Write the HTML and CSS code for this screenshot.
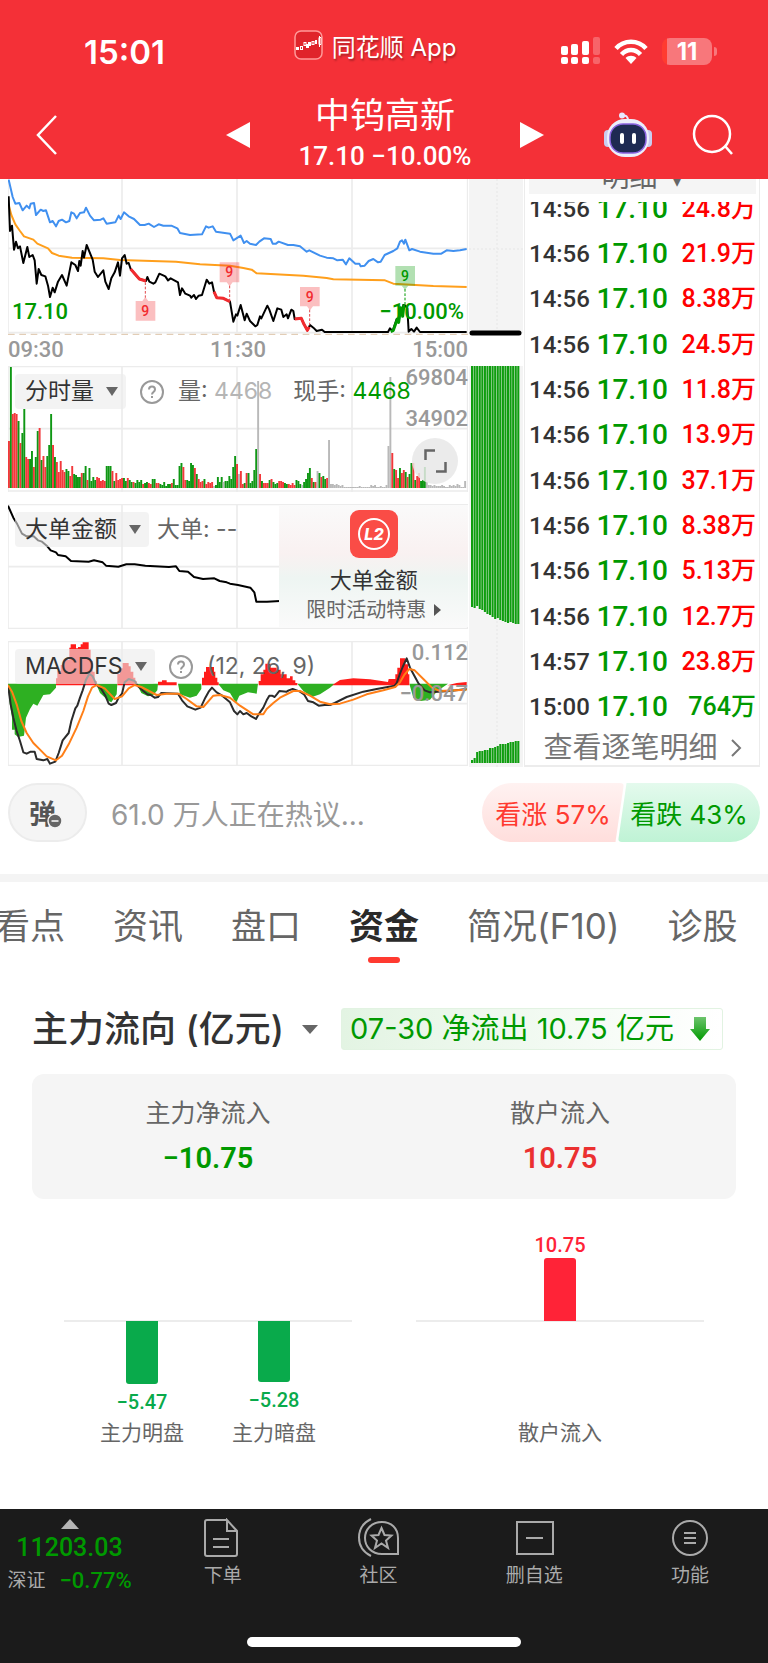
FILE: index.html
```html
<!DOCTYPE html>
<html lang="zh-CN">
  <head>
    <meta charset="UTF-8" />
    <meta name="viewport" content="width=device-width, initial-scale=1.0" />
    <title>中钨高新</title>
    <link rel="stylesheet" href="styles.css">
  </head>
  <body>
    <header class="top">
      <div class="status">
        <span class="clock">15:01</span>
        <span class="app">
          <svg width="29" height="30" viewBox="0 0 29 30">
            <rect x="1" y="1" width="27" height="28" rx="6" fill="#e0242b" stroke="#f99" stroke-width="1.500" />
            <g fill="#fff">
              <rect x="2" y="17" width="3" height="3" /><rect x="12" y="14" width="3" height="4" />
              <rect x="14" y="12" width="3" height="4" /><rect x="21" y="10" width="2" height="4" />
            </g>
            <g fill="none" stroke="#fff">
              <rect x="6.500" y="16.500" width="2" height="3" /><rect x="10" y="12.500" width="2" height="3" />
              <rect x="18" y="11.500" width="2" height="3" /><path d="M25.500 6v11M25 7.500h2v7h-2z" />
            </g>
          </svg>
          同花顺 App
        </span>
        <span class="signals">
          <svg width="40" height="28" viewBox="0 0 40 28" fill="#fff">
            <rect x="1" y="9" width="7" height="9" rx="2" /><rect x="11" y="7" width="7" height="11" rx="2" />
            <rect x="22" y="4" width="7" height="14" rx="2" /><rect x="33" y="0" width="7" height="18" rx="2" opacity=".25" />
            <rect x="1" y="20" width="7" height="7" rx="2" /><rect x="11" y="20" width="7" height="7" rx="2" />
            <rect x="22" y="20" width="7" height="7" rx="2" /><rect x="33" y="20" width="7" height="7" rx="2" opacity=".25" />
          </svg>
          <svg width="34" height="25" viewBox="0 0 34 25">
            <g fill="none" stroke="#fff" stroke-width="4.500">
              <path d="M2 9.500C10 .500 24 .500 32 9.500" /><path d="M7.500 15.500C13 9.500 21 9.500 26.500 15.500" />
            </g>
            <path d="M17 25l-5.500-6c3-3 8-3 11 0z" fill="#fff" />
          </svg>
          <span class="battery">11</span>
        </span>
      </div>
      <div class="titlebar">
        <button class="icon-btn back" aria-label="返回">
          <svg width="24" height="42" viewBox="0 0 24 42"><path d="M21 2L3 21l18 19" fill="none" stroke="#fff" stroke-width="2.500" /></svg>
        </button>
        <div class="stock">
          <button class="icon-btn" aria-label="上一只"><svg width="24" height="26" viewBox="0 0 24 26"><path d="M24 0v26L0 13z" fill="#fff" /></svg></button>
          <div class="stock-name">
            <h1>中钨高新</h1>
            <p>17.10 −10.00%</p>
          </div>
          <button class="icon-btn" aria-label="下一只"><svg width="24" height="26" viewBox="0 0 24 26"><path d="M0 0v26l24-13z" fill="#fff" /></svg></button>
        </div>
        <div class="tools">
          <button class="icon-btn" aria-label="助手">
            <svg width="48" height="46" viewBox="0 0 48 46">
              <path d="M24 9c0-5-2-6-6-5.500" fill="none" stroke="#e8e8ff" stroke-width="2" />
              <circle cx="18" cy="3.500" r="3" fill="#e8e8ff" />
              <rect x="0" y="18" width="8" height="17" rx="4" fill="#c9cdf0" /><rect x="40" y="18" width="8" height="17" rx="4" fill="#c9cdf0" />
              <rect x="3" y="7" width="42" height="38" rx="18" fill="#eceefb" />
              <rect x="6" y="12" width="36" height="29" rx="13" fill="#1e2a52" stroke="#8a63e0" stroke-width="1.500" />
              <rect x="16" y="21" width="4" height="11" rx="2" fill="#fff" /><rect x="28" y="21" width="4" height="11" rx="2" fill="#fff" />
            </svg>
          </button>
          <button class="icon-btn" aria-label="搜索">
            <svg width="42" height="42" viewBox="0 0 42 42" fill="none" stroke="#fff" stroke-width="2.500"><circle cx="20" cy="20" r="18" /><path d="M33 32l7 8" /></svg>
          </button>
        </div>
      </div>
    </header>

    <main>
      <section class="quote">
        <div class="charts">
          <div class="chart">
            <svg viewBox="24 12 1380 468">
              <path class="grid" d="M24 12V474M366 12V474M711 12V474M1056 12V474M1403 12V474M24 220H1404M24 473H1404" />
              <path d="M24 478H1404" stroke="#dcc3a8" stroke-width="3" stroke-dasharray="20 14" />
              <polyline class="line blue" points="26,14 38,66 46,86 58,84 68,106 80,92 88,100 92,86 102,84 108,120 122,104 130,108 138,106 150,142 158,138 168,154 176,138 186,134 198,142 208,138 214,112 222,116 230,130 240,114 252,112 258,98 270,122 282,136 302,134 310,130 320,146 346,142 356,122 362,132 372,112 386,124 402,132 420,150 434,150 446,146 462,156 476,148 490,152 514,152 532,160 540,174 570,180 606,178 618,154 626,158 638,154 648,170 690,176 700,196 722,182 732,204 740,198 750,206 768,210 778,200 792,190 812,192 818,206 828,206 836,200 864,210 880,210 900,214 920,230 928,226 960,242 980,248 1000,250 1012,256 1028,254 1038,268 1048,250 1066,266 1078,266 1082,274 1094,272 1106,258 1120,252 1134,262 1142,260 1154,240 1180,228 1192,220 1200,200 1206,196 1212,206 1216,194 1228,226 1236,222 1260,230 1300,236 1324,236 1340,226 1360,228 1380,226 1400,222" />
              <polyline class="line orange" points="26,90 34,120 46,148 60,168 72,184 100,194 112,206 144,220 156,234 176,242 216,248 310,250 360,255 528,260 600,268 690,272 730,279 755,284 770,295 910,302 980,309 1000,313 1155,316 1180,326 1300,333 1400,336" />
              <polyline class="line" points="26,64 30,168 36,152 42,224 48,200 54,220 60,214 70,264 82,216 88,246 98,240 104,256 110,326 116,282 124,300 136,304 144,332 150,366 158,338 164,352 174,320 186,300 200,332 214,262 226,270 234,288 238,258 242,272 248,228 252,248 260,210 278,254 284,290 294,306 310,286 316,320 326,342 334,310 344,292 354,262 360,302 366,250 374,240 380,266 386,264 392,282 418,312 438,318 442,306 448,320 460,326 466,322 478,296 496,304 504,316 512,310 534,322 540,360 546,340 556,356 570,362 574,368 582,360 588,372 596,362 606,360 620,314 628,326 636,322 642,350 650,368 670,370 690,380 700,440 708,418 712,422 722,390 734,436 740,416 750,438 766,454 772,450 780,424 784,430 802,392 808,404 820,438 832,400 844,404 850,426 860,418 864,430 874,404 880,408 884,432 904,430 912,448 922,466 930,450 940,458 950,468 966,464 974,471 1164,471 1170,460 1178,468 1190,432 1194,440 1200,400 1206,420 1210,390 1216,392 1222,400 1226,470 1234,462 1242,470 1250,458 1260,471 1400,471" />
              <g class="nine">
                <path class="line" d="M392 282L418 312 438 318M642 350l8 18 20 2 20 10M884 432l20-2 8 18 10 18 6-10" />
                <path class="drop" d="M436 322V368M689 332V380M929 404V452" />
                <path class="flag" d="M407 378h20l9-12 9 12h21v59h-59zM659 262h59v60h-20l-9 12-9-12h-21zM900 336h59v58h-20l-9 12-9-12h-21z" />
                <text x="436" y="422">9</text><text x="688" y="307">9</text><text x="929" y="380">9</text>
              </g>
              <g class="nine down">
                <path class="line" d="M1172 470l8-4 12-34 4 10 6-44 6 26 4-36" />
                <path class="drop" d="M1215 342V395" />
                <path class="flag" d="M1186 273h59v59h-20l-10 12-10-12h-19z" />
                <text x="1215" y="317">9</text>
              </g>
            </svg>
            <span class="axis green price">17.10</span>
            <span class="axis green rate">−10.00%</span>
          </div>
          <div class="times"><span>09:30</span><span>11:30</span><span>15:00</span></div>

          <div class="chart">
            <svg viewBox="24 18 1380 378">
              <path class="grid" d="M24 19H1404M24 206H1404M24 393H1404M24 18V396M366 18V396M711 18V396M1056 18V396M1403 18V396" />
              <g id="volume"></g>
            </svg>
            <div class="legend">
              <span class="pick"><select aria-label="副图一"><option>分时量</option></select></span>
              <svg class="help" width="24" height="24" viewBox="0 0 24 24"><circle cx="12" cy="12" r="11" /><path d="M9 9.500C9 5.500 15 5.500 15 9.500 15 12 12 12 12 14.500M12 16v2" /></svg>
              <span>量: <i>4468</i></span>
              <span class="now">现手: <b>4468</b></span>
            </div>
            <span class="axis top-num">69804</span>
            <span class="axis mid-num">34902</span>
            <button class="expand" aria-label="全屏">
              <svg width="23" height="24" viewBox="0 0 23 24" fill="none" stroke="#666" stroke-width="2.500"><path d="M1.500 11V1.500H11M21.500 13v9.500H12" /></svg>
            </button>
          </div>

          <div class="chart">
            <svg viewBox="24 27 1380 375">
              <path class="grid" d="M24 28H1404M24 215H1404M24 401H1404M24 27V402M366 27V402M711 27V402M1403 27V402" />
              <polyline class="line" points="24,32 40,68 52,88 66,116 80,124 101,124 114,136 126,140 142,154 152,166 168,172 174,180 197,184 213,198 266,200 282,196 308,202 318,212 355,215 379,208 404,208 436,212 507,216 528,214 538,228 564,230 582,246 609,252 643,250 659,258 680,262 690,266 714,270 751,278 763,292 769,320 801,320 840,318" />
            </svg>
            <div class="legend tight">
              <span class="pick"><select aria-label="副图二"><option>大单金额</option></select></span>
              <span>大单: --</span>
            </div>
            <a class="promo" href="#">
              <svg width="48" height="48" viewBox="0 0 48 48">
                <rect width="48" height="48" rx="9" fill="#fa4c46" /><circle cx="24" cy="24" r="15" fill="none" stroke="#fff" stroke-width="2" />
                <text x="24" y="30" fill="#fff" font-size="16" font-weight="800" font-style="italic" text-anchor="middle">L2</text>
              </svg>
              <strong>大单金额</strong>
              <small>限时活动特惠 <svg width="7" height="12" viewBox="0 0 7 12"><path d="M0 0l7 6-7 6z" fill="#555" /></svg></small>
            </a>
          </div>

          <div class="chart">
            <svg viewBox="24 20 1380 375">
              <path class="grid" d="M24 21H1404M24 208H1404M24 394H1404M24 20V395M366 20V395M711 20V395M1056 20V395M1403 20V395" />
              <g fill="#2eb022">
                <path d="M24 148L28 200 36 250 36 286 44 286 44 300 54 308 72 304 78 250 90 224 100 208 112 214 130 182 150 180 168 160V148zM288 148l12 28 26 24 8 4 16-24 2-32zM410 148l14 28 20 10 16-4 12-14 2-20zM534 148l6 32 30 10 20-6 14-20v-16zM654 148l16 20 20 8 18 30 10-22 26-10 26 4 4-30zM892 148l18 22 26 18 24-8 30-20 14-12zM1228 148l12 42 22 10 28-4 22-26 32-22z" />
              </g>
              <path d="M168 153V132H172V110H182V92H190V76H208V40H212V30H228V42H234V38H242V30H248V24H266V46H272V80H278V112H284V140H290V153zM352 153V118H360V102H368V86H386V96H392V112H400V130H406V140H410V153zM474 153V142H486V138H500V144H530V153zM606 153V130H612V112H618V98H642V112H646V130H652V144H656V153zM776 153V140H782V120H790V106H796V88H812V100H830V106H842V120H860V132H870V126H878V138H886V146H892V153zM996 153L1020 137 1060 132 1110 135 1164 143 1166 134H1186V120H1192V100H1200V72H1216V90H1224V120H1228V153zM1342 153L1370 146 1400 143V153z" fill="#ff1c1a" />
              <polyline class="line dark" points="24,152 32,210 40,250 50,290 60,320 70,354 80,358 92,352 104,352 110,374 130,378 142,374 150,388 166,382 176,356 188,318 206,296 214,260 226,222 232,214 240,190 248,168 258,136 268,118 278,126 290,152 304,164 316,184 326,208 334,212 348,206 356,190 366,178 374,144 386,134 404,140 414,156 430,170 442,180 452,182 464,190 474,188 484,176 534,178 546,198 562,216 586,226 602,220 616,190 626,172 636,160 650,174 664,182 690,204 702,230 712,240 720,230 730,240 740,236 754,246 768,254 776,240 790,220 800,198 808,184 816,184 824,188 832,178 838,170 860,172 866,168 878,164 890,168 900,172 912,180 924,200 940,204 956,214 974,212 990,212 1004,206 1040,188 1090,172 1130,164 1184,154 1190,146 1200,118 1208,98 1220,72 1230,100 1256,148 1274,168 1290,174 1350,170 1400,164" />
              <polyline class="line macd" points="24,152 36,172 50,210 64,260 80,296 100,326 120,346 140,366 168,378 186,364 206,330 230,280 250,230 264,186 276,160 290,152 314,162 344,194 366,186 386,162 404,152 424,158 470,182 500,178 536,178 560,194 590,216 610,218 640,184 660,182 690,190 720,214 760,240 790,240 800,224 820,206 840,190 880,170 900,170 930,184 960,202 990,210 1020,208 1060,196 1100,180 1150,168 1186,158 1200,144 1214,120 1228,104 1244,108 1270,134 1296,160 1320,170 1400,166" />
            </svg>
            <div class="legend">
              <span class="pick"><select aria-label="副图三"><option>MACDFS</option></select></span>
              <svg class="help" width="24" height="24" viewBox="0 0 24 24"><circle cx="12" cy="12" r="11" /><path d="M9 9.500C9 5.500 15 5.500 15 9.500 15 12 12 12 12 14.500M12 16v2" /></svg>
              <span>(12, 26, 9)</span>
            </div>
            <span class="axis top-num">0.112</span>
            <span class="axis mid-num">−0.047</span>
          </div>
        </div>

        <svg class="after" viewBox="0 0 56 588">
          <path d="M1 0h54v154H1zM1 187h54v401H1z" fill="#f4f4f4" />
          <path d="M29 0v154M29 430v158M1 70h54" stroke="#e6e6e6" stroke-dasharray="2 2" />
          <path d="M4 154h47" stroke="#000" stroke-width="5" stroke-linecap="round" />
          <g id="afterHours" fill="#0f9d0f"></g>
        </svg>

        <div class="ticks">
          <button class="ticks-head">明细 <span>▾</span></button>
          <div class="ticks-view">
            <table>
              <tbody>
                <tr><td>14:56</td><td>17.10</td><td>24.8万</td></tr>
                <tr><td>14:56</td><td>17.10</td><td>21.9万</td></tr>
                <tr><td>14:56</td><td>17.10</td><td>8.38万</td></tr>
                <tr><td>14:56</td><td>17.10</td><td>24.5万</td></tr>
                <tr><td>14:56</td><td>17.10</td><td>11.8万</td></tr>
                <tr><td>14:56</td><td>17.10</td><td>13.9万</td></tr>
                <tr><td>14:56</td><td>17.10</td><td>37.1万</td></tr>
                <tr><td>14:56</td><td>17.10</td><td>8.38万</td></tr>
                <tr><td>14:56</td><td>17.10</td><td>5.13万</td></tr>
                <tr><td>14:56</td><td>17.10</td><td>12.7万</td></tr>
                <tr><td>14:57</td><td>17.10</td><td>23.8万</td></tr>
                <tr><td>15:00</td><td>17.10</td><td class="green">764万</td></tr>
              </tbody>
            </table>
          </div>
          <a class="ticks-more" href="#">查看逐笔明细
            <svg width="12" height="18" viewBox="0 0 12 18"><path d="M2 1l8 8-8 8" fill="none" stroke="#777" stroke-width="2" /></svg>
          </a>
        </div>
      </section>

      <section class="talk">
        <button class="danmu" aria-label="弹幕">弹
          <svg width="16" height="16" viewBox="0 0 16 16"><circle cx="8" cy="8" r="7" fill="#666" stroke="#f4f4f4" stroke-width="1.500" /><path d="M4.500 8h7" stroke="#fff" stroke-width="1.500" /></svg>
        </button>
        <a class="talk-text" href="#">61.0 万人正在热议...</a>
        <div class="vote">
          <button class="up">看涨 57%</button>
          <button class="fall">看跌 43%</button>
        </div>
      </section>

      <nav class="tabs">
        <a href="#">看点</a>
        <a href="#">资讯</a>
        <a href="#">盘口</a>
        <a href="#" class="active">资金</a>
        <a href="#">简况(F10)</a>
        <a href="#">诊股</a>
      </nav>

      <section class="flow">
        <div class="flow-head">
          <span class="flow-pick"><select aria-label="统计口径"><option>主力流向 (亿元)</option></select></span>
          <a class="flow-tag" href="#">07-30 净流出 10.75 亿元
            <svg width="20" height="24" viewBox="0 0 20 24">
              <defs><linearGradient id="arrow" x2="0" y2="1"><stop stop-color="#6cc46c" /><stop offset="1" stop-color="#009a00" /></linearGradient></defs>
              <path d="M4 0h12v12h4L10 24 0 12h4z" fill="url(#arrow)" />
            </svg>
          </a>
        </div>
        <div class="summary">
          <div><span>主力净流入</span><b class="green">−10.75</b></div>
          <div><span>散户流入</span><b class="red">10.75</b></div>
        </div>
        <div class="bars">
          <div class="bar-group">
            <div class="bar neg"><div class="low"><i style="height: 63px"></i><b>−5.47</b></div><span>主力明盘</span></div>
            <div class="bar neg"><div class="low"><i style="height: 61px"></i><b>−5.28</b></div><span>主力暗盘</span></div>
          </div>
          <div class="bar-group">
            <div class="bar pos"><div class="high"><b>10.75</b><i style="height: 63px"></i></div><span>散户流入</span></div>
          </div>
        </div>
      </section>
    </main>

    <footer class="bottom">
      <div class="bottom-row">
        <a class="index" href="#">
          <svg width="18" height="10" viewBox="0 0 18 10"><path d="M9 0l9 10H0z" fill="#b5b5b5" /></svg>
          <b>11203.03</b>
          <span>深证 <em>−0.77%</em></span>
        </a>
        <a class="item" href="#">
          <svg width="42" height="40" viewBox="0 0 42 40"><path d="M25 2H5q-2 0-2 2v32q0 2 2 2h28q2 0 2-2V13L25 2v11h10M11 21h16M11 29h16" /></svg>
          下单
        </a>
        <a class="item" href="#">
          <svg width="42" height="40" viewBox="0 0 42 40"><path d="M24 4C13 4 7 12 7 20s6 16 17 16h16V20C40 10 33 4 24 4zM13 1C-3 9-3 30 13 38M23.500 10l3 7 7 .500-5.500 5 2 7.500-6.500-4.500L17 30l2-7.500-5.500-5 7-.500z" /></svg>
          社区
        </a>
        <a class="item" href="#">
          <svg width="42" height="40" viewBox="0 0 42 40"><path d="M4 4h36v32H4zM13 20h17" /></svg>
          删自选
        </a>
        <a class="item" href="#">
          <svg width="42" height="40" viewBox="0 0 42 40"><circle cx="21" cy="20" r="17" /><path d="M15 15h12M15 20h12M15 25h12" /></svg>
          功能
        </a>
      </div>
      <div class="home"></div>
    </footer>

    <script src="script.js"></script>
  </body>
</html>
```

FILE: styles.css
```css
body {
  margin: 0;
  background-color: #fff;
  color: #333;
  font-family: Inter, "Noto Sans CJK SC", sans-serif;
}
h1,
p {
  margin: 0;
  font-weight: 400;
}
a {
  color: inherit;
  text-decoration: none;
}
button,
select {
  margin: 0;
  padding: 0;
  border: 0;
  background: none;
  color: inherit;
  font: inherit;
  appearance: none;
}
svg {
  display: block;
  flex-shrink: 0;
}
.green {
  color: #009900;
}
.red {
  color: #eb3030;
}

/* 顶部 */
.top {
  height: 179px;
  background-color: #f43037;
  color: #fff;
}
.status {
  display: grid;
  grid-template-columns: 1fr auto 1fr;
  height: 89px;
}
.clock {
  padding: 32px 0 0 84px;
  font-size: 33px;
  font-weight: 600;
  line-height: 40px;
}
.app {
  display: flex;
  align-items: center;
  gap: 9px;
  height: 30px;
  padding: 30px 18px 0 0;
  font-size: 24px;
  text-shadow: 1px 2px 2px rgba(0, 0, 0, 0.3);
}
.signals {
  display: flex;
  align-items: center;
  justify-content: flex-end;
  gap: 14px;
  height: 28px;
  padding: 37px 56px 0 0;
}
.battery {
  position: relative;
  width: 50px;
  height: 27px;
  border-radius: 8px;
  background: linear-gradient(90deg, #ff3b30 5px, #f8777b 5px);
  font-size: 24px;
  font-weight: 700;
  line-height: 27px;
  text-align: center;
}
.battery::after {
  content: "";
  position: absolute;
  top: 9px;
  right: -5px;
  width: 3px;
  height: 9px;
  border-radius: 0 3px 3px 0;
  background-color: #f8777b;
}
.titlebar {
  display: grid;
  grid-template-columns: 1fr 320px 1fr;
  align-items: center;
  height: 92px;
}
.icon-btn {
  display: flex;
  align-items: center;
}
.back {
  padding-left: 35px;
}
.stock {
  display: flex;
  align-items: center;
  justify-content: space-between;
  padding-left: 2px;
}
.stock-name {
  text-align: center;
}
.stock-name h1 {
  font-size: 35px;
  line-height: 46px;
}
.stock-name p {
  padding-bottom: 4px;
  font-family: Roboto, sans-serif;
  font-size: 26px;
  font-weight: 500;
  line-height: 36px;
}
.tools {
  display: flex;
  align-items: center;
  justify-content: flex-end;
  gap: 40px;
  padding-right: 34px;
}

/* 分时图 */
.quote {
  display: grid;
  grid-template-columns: 460fr 56fr 236fr;
  padding: 0 8px;
}
.chart {
  position: relative;
  margin-bottom: 12px;
}
.chart:first-child,
.chart:last-child {
  margin-bottom: 0;
}
.chart > svg,
.after {
  width: 100%;
  height: auto;
}
.grid {
  fill: none;
  stroke: #ececec;
  stroke-width: 5;
}
.line {
  fill: none;
  stroke: #000;
  stroke-width: 6;
  stroke-linejoin: round;
}
.blue {
  stroke: #4090f0;
}
.orange {
  stroke: #ff9f1c;
}
.dark {
  stroke: #2b2b2b;
}
.macd {
  stroke: #ff7f17;
}
.nine .line {
  stroke: #f22b2f;
  stroke-width: 9;
}
.nine .drop {
  stroke: #e0484b;
  stroke-width: 3;
  stroke-dasharray: 8 5;
}
.nine .flag {
  fill: #f22b2f;
  fill-opacity: 0.3;
}
.nine text {
  fill: #f22b2f;
  font-family: Roboto, sans-serif;
  font-size: 42px;
  font-weight: 500;
  text-anchor: middle;
}
.nine.down .line,
.nine.down .drop {
  stroke: #009900;
}
.nine.down .flag,
.nine.down text {
  fill: #009900;
}
.axis {
  position: absolute;
  right: 0;
  color: #999;
  font-family: Roboto, sans-serif;
  font-size: 22px;
  font-weight: 500;
  line-height: 24px;
}
.axis.green {
  bottom: 11px;
  color: #009900;
}
.price {
  right: auto;
  left: 4px;
}
.rate {
  right: 4px;
}
.top-num {
  top: 0;
}
.mid-num {
  top: 41px;
}
.times {
  display: flex;
  justify-content: space-between;
  height: 31px;
  color: #999;
  font-family: Roboto, sans-serif;
  font-size: 22px;
  font-weight: 500;
  line-height: 29px;
}
.legend {
  position: absolute;
  top: 8px;
  left: 7px;
  display: flex;
  align-items: center;
  gap: 14px;
  color: #666;
  font-size: 23px;
  line-height: 35px;
  white-space: nowrap;
}
.legend.tight {
  gap: 8px;
}
.legend i {
  color: #b5b5b5;
  font-style: normal;
}
.legend b {
  color: #009900;
  font-weight: 400;
}
.now {
  margin-left: 7px;
}
.pick,
.flow-pick {
  position: relative;
  display: block;
}
.pick select {
  display: block;
  height: 35px;
  padding: 0 32px 0 10px;
  border-radius: 4px;
  background-color: rgba(235, 235, 235, 0.6);
  color: #333;
}
.pick::after,
.flow-pick::after {
  content: "";
  position: absolute;
  top: 13px;
  right: 8px;
  border: 6px solid transparent;
  border-top: 9px solid #666;
  border-bottom: 0;
}
.help {
  fill: none;
  stroke: #999;
  stroke-width: 2;
}
.expand {
  position: absolute;
  right: 10px;
  bottom: 8px;
  display: flex;
  align-items: center;
  justify-content: center;
  width: 46px;
  height: 46px;
  border-radius: 50%;
  background-color: rgba(232, 232, 232, 0.85);
}
.promo {
  position: absolute;
  top: 1px;
  right: 0;
  bottom: 2px;
  width: 41%;
  display: flex;
  flex-direction: column;
  align-items: center;
  padding-top: 5px;
  box-sizing: border-box;
  background: linear-gradient(180deg, #fafafa, #f9f1f1 40%, #eef5f2 60%, #fafafa);
}
.promo strong {
  font-size: 22px;
  font-weight: 400;
  line-height: 36px;
  padding-top: 4px;
}
.promo small {
  display: flex;
  align-items: center;
  gap: 8px;
  color: #666;
  font-size: 20px;
  line-height: 24px;
}

/* 成交明细 */
.ticks {
  display: flex;
  flex-direction: column;
  box-sizing: border-box;
  padding: 0 3px 0 4px;
  border: solid #ececec;
  border-width: 0 1px 2px;
}
.ticks-head {
  display: flex;
  align-items: flex-end;
  justify-content: center;
  gap: 12px;
  height: 15px;
  overflow: hidden;
  background-color: #f5f5f5;
  color: #666;
  font-size: 28px;
  line-height: 34px;
}
.ticks-view {
  display: flex;
  flex-direction: column;
  justify-content: flex-end;
  height: 528px;
  margin-top: 8px;
  overflow: hidden;
}
.ticks table {
  width: 100%;
  height: 544px;
  flex-shrink: 0;
  border-collapse: collapse;
  font-family: Roboto, "Noto Sans CJK SC", sans-serif;
  font-size: 24px;
  font-weight: 500;
  line-height: 36px;
}
.ticks td {
  padding: 0;
  white-space: nowrap;
}
.ticks td:nth-child(2) {
  padding-right: 6px;
  color: #009900;
  font-size: 28px;
  text-align: center;
}
.ticks td:nth-child(3) {
  color: #f00;
  font-size: 25px;
  text-align: right;
}
.ticks td.green:nth-child(3) {
  color: #009900;
}
.ticks-more {
  display: flex;
  align-items: center;
  justify-content: center;
  gap: 12px;
  height: 35px;
  color: #777;
  font-size: 29px;
  line-height: 35px;
}

/* 热议 */
.talk {
  display: flex;
  align-items: center;
  padding: 16px 8px 32px;
  border-bottom: 8px solid #f4f4f4;
}
.danmu {
  position: relative;
  box-sizing: border-box;
  width: 79px;
  height: 59px;
  padding-right: 10px;
  border: 2px solid #ececec;
  border-radius: 30px;
  background-color: #f5f5f5;
  color: #555;
  font-size: 27px;
  font-weight: 700;
}
.danmu svg {
  position: absolute;
  right: 22px;
  bottom: 11px;
}
.talk-text {
  flex: 1;
  padding-left: 24px;
  color: #999;
  font-size: 28px;
}
.vote {
  display: flex;
}
.vote button {
  width: 142px;
  height: 59px;
  font-size: 26px;
  font-weight: 400;
}
.vote .up {
  border-radius: 30px 4px 4px 30px;
  background: linear-gradient(180deg, #fff2f1, #ffdedc);
  clip-path: polygon(0 0, 100% 0, 94% 100%, 0 100%);
  color: #ff3a30;
}
.vote .fall {
  margin-left: -6px;
  border-radius: 4px 30px 30px 4px;
  background: linear-gradient(180deg, #e4faed, #bff3d5);
  clip-path: polygon(6% 0, 100% 0, 100% 100%, 0 100%);
  color: #009900;
}

/* 标签栏 */
.tabs {
  display: flex;
  gap: 48px;
  margin-left: -5px;
  overflow: hidden;
  color: #666;
  font-size: 35px;
  line-height: 50px;
  white-space: nowrap;
}
.tabs a {
  padding: 19px 0 12px;
}
.tabs .active {
  color: #2a2a2a;
  font-weight: 700;
}
.tabs .active::after {
  content: "";
  display: block;
  width: 32px;
  height: 6px;
  margin: 6px auto 0;
  border-radius: 3px;
  background-color: #ff3a30;
}

/* 资金流向 */
.flow {
  padding: 30px 32px 0;
}
.flow-head {
  display: flex;
  align-items: center;
  gap: 22px;
}
.flow-pick {
  font-size: 36px;
  font-weight: 500;
  line-height: 48px;
}
.flow-pick select {
  padding-right: 34px;
}
.flow-pick::after {
  top: 20px;
  right: 1px;
  border-width: 9px 8px 0;
}
.flow-tag {
  display: flex;
  align-items: center;
  gap: 16px;
  padding: 0 12px 0 8px;
  border: 1px solid #e2f3e2;
  border-radius: 3px;
  background: linear-gradient(90deg, #e3f4e3, #fff);
  color: #009900;
  font-size: 29px;
  line-height: 40px;
  white-space: nowrap;
}
.summary {
  display: grid;
  grid-template-columns: 1fr 1fr;
  box-sizing: border-box;
  height: 125px;
  margin-top: 21px;
  padding: 20px 0;
  border-radius: 12px;
  background-color: #f5f5f5;
  text-align: center;
}
.summary span {
  display: block;
  color: #666;
  font-size: 25px;
  line-height: 38px;
}
.summary b {
  display: block;
  font-family: Roboto, sans-serif;
  font-size: 29px;
  font-weight: 600;
  line-height: 52px;
}
.bars {
  display: grid;
  grid-template-columns: 1fr 1fr;
  gap: 64px;
  margin: 0 32px;
  padding-bottom: 60px;
}
.bar-group {
  display: flex;
  justify-content: center;
  gap: 48px;
  background: linear-gradient(#ececec, #ececec) 0 121px / 100% 2px no-repeat;
}
.bar {
  display: flex;
  flex-direction: column;
  align-items: center;
  font-size: 21px;
}
.bar .high,
.bar .low {
  display: flex;
  flex-direction: column;
  align-items: center;
  height: 122px;
}
.bar .high {
  justify-content: flex-end;
  margin-bottom: 96px;
}
.bar .low {
  height: 96px;
  margin-top: 122px;
}
.bar i {
  width: 32px;
}
.bar b {
  font-family: Roboto, sans-serif;
  font-size: 20px;
  font-weight: 500;
  line-height: 26px;
}
.neg b {
  padding-top: 5px;
  color: #09aa4b;
}
.pos b {
  color: #ff2337;
}
.neg i {
  border-radius: 0 0 3px 3px;
  background-color: #09aa4b;
}
.pos i {
  border-radius: 3px 3px 0 0;
  background-color: #ff2337;
}
.bar span {
  color: #666;
  line-height: 32px;
}

/* 底部 */
.bottom {
  padding-bottom: 17px;
  background-color: #1b1b1b;
  color: #aaa;
}
.bottom-row {
  display: flex;
  height: 128px;
}
.index {
  display: flex;
  flex-direction: column;
  align-items: center;
  width: 145px;
  padding: 10px 6px 0 0;
  box-sizing: border-box;
  font-size: 19px;
}
.index b {
  color: #009900;
  font-family: Roboto, sans-serif;
  font-size: 25px;
  font-weight: 500;
  line-height: 38px;
}
.index span {
  display: flex;
  align-items: center;
  gap: 14px;
  line-height: 28px;
}
.index em {
  color: #009900;
  font-family: Roboto, sans-serif;
  font-size: 22px;
  font-style: normal;
  font-weight: 500;
}
.item {
  display: flex;
  flex: 1;
  flex-direction: column;
  align-items: center;
  gap: 6px;
  padding-top: 9px;
  font-size: 19px;
  line-height: 24px;
}
.item svg {
  fill: none;
  stroke: #aaa;
  stroke-width: 2;
}
.home {
  width: 274px;
  height: 10px;
  margin: 0 auto;
  border-radius: 5px;
  background-color: #fff;
}
```

FILE: script.js
```js
// r 红, g 绿, x 灰, 后面是柱高
const volume =
  "r47 g121 r74 r75 r74 g67 r45 g55 g79 r31 r29 g29 g37 r21 g31 g57 r60 g28 r32 r21 g32 g43 g74 r43 g31 r26 r16 r27 r18 r16 " +
  "g19 g17 r12 r22 g14 g13 g11 g11 r15 g15 g22 r8 g20 g7 g11 g8 r11 r10 r7 r8 r7 g22 g22 g22 r17 g7 r15 r8 r9 r10 " +
  "g10 g7 r10 g8 g6 r6 g5 g8 g6 g8 r4 g5 g6 r5 r4 g9 g9 r5 r5 g4 g3 g6 g2 g4 g4 r5 g9 g3 g3 g22 " +
  "g25 r21 r8 g8 g7 g25 g23 r20 g14 r9 r6 r7 g9 r4 r6 r5 r6 x2 g3 g11 g6 g11 x6 g7 g7 g12 g9 g21 g32 r24 " +
  "x14 r17 r4 g5 r15 g15 g5 g7 g18 g39 x107 r14 g7 r5 r5 r5 g8 r9 g6 g4 g5 r7 r7 r6 g5 g4 r4 r3 r5 r3 " +
  "g8 g7 g4 x3 g6 g9 g15 g20 r10 g6 r6 x17 g15 r11 g12 g9 r10 x48 x4 x4 x3 x4 x3 x2 x3 x1 x1 x1 x1 x1 x1 " +
  "x1 x1 x2 x1 x1 x1 x1 x1 x3 x2 x3 x1 x1 x2 x1 x1 x3 x42 x111 r35 g19 r18 r10 g20 r15 r18 g16 r11 g14 g25 " +
  "r25 g8 r12 r15 g7 g8 g21 x6 x3 x3 x2 x3 x2 x2 x2 x3 x2 x1 x1 x3 x2 x3 x2 x4 x3 x1 x1 x7";
const colors = { r: "#f2383b", g: "#0f9714", x: "#b9b9b9" };

function addBar(parent, x, y, width, height, color) {
  const bar = document.createElementNS("http://www.w3.org/2000/svg", "rect");
  bar.setAttribute("x", x);
  bar.setAttribute("y", y);
  bar.setAttribute("width", width);
  bar.setAttribute("height", height);
  if (color) bar.setAttribute("fill", color);
  parent.appendChild(bar);
}

const volumeBox = document.getElementById("volume");
volume.split(" ").forEach((item, i) => {
  const height = Number(item.slice(1)) * 3;
  addBar(volumeBox, 24 + i * 5.75, 384 - height, 5.75, height, colors[item[0]]);
});

// 盘后区: 上面挂单, 下面成交
const orders = [241, 242, 240, 243, 244, 246, 248, 249, 251, 253, 252, 254, 255, 256, 257, 256, 257, 258, 258];
const deals = [3, 5, 11, 12, 12, 13, 13, 15, 15, 16, 17, 19, 19, 19, 20, 21, 21, 22, 22];
const afterBox = document.getElementById("afterHours");
orders.forEach((height, i) => {
  addBar(afterBox, 3 + i * 2.57, 187, 2.1, height);
  addBar(afterBox, 3 + i * 2.57, 584 - deals[i], 2.1, deals[i]);
});
```
